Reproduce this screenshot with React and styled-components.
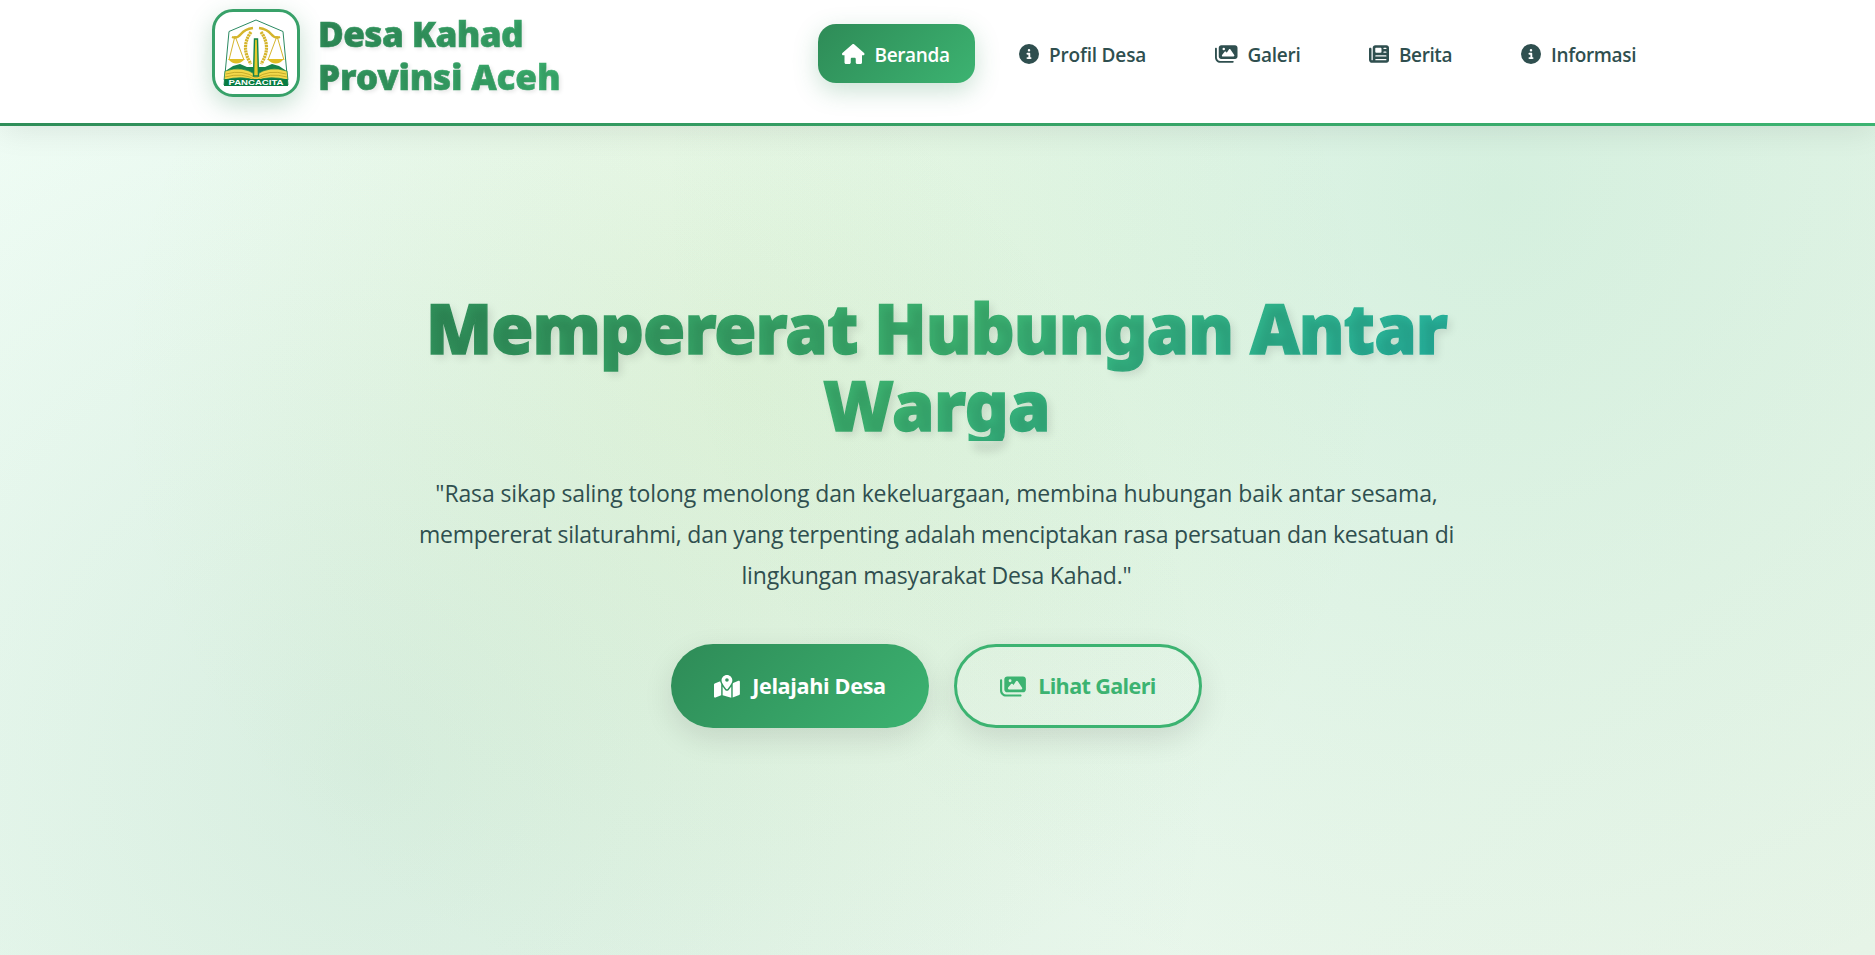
import React from 'react';
import styled, { createGlobalStyle, css } from 'styled-components';
import { FaHouse, FaCircleInfo, FaImages, FaNewspaper, FaMapLocationDot } from 'react-icons/fa6';

const Global = createGlobalStyle`
  *, *::before, *::after { box-sizing: border-box; }
  body {
    margin: 0;
    overflow: hidden;
    color: #2f4f4f;
    font-family: 'Segoe UI', 'Open Sans', 'Noto Sans', sans-serif;
  }
`;

const Page = styled.div`
  display: flex;
  flex-direction: column;
  height: 955px;
  background:
    radial-gradient(circle at 20% 80%, rgba(46, 139, 87, 0.11) 0%, transparent 50%),
    radial-gradient(circle at 80% 20%, rgba(60, 179, 113, 0.12) 0%, transparent 50%),
    radial-gradient(circle at 40% 40%, rgba(154, 205, 50, 0.1) 0%, transparent 50%),
    linear-gradient(135deg, #f2fef7 0%, #ebf9ef 50%, #e6f4e7 100%);
`;

const Header = styled.header`
  flex: none;
  height: 126px;
  background: #fff;
  border-bottom: 3px solid;
  border-image: linear-gradient(135deg, #2e8b57, #3cb371) 1;
  box-shadow: 0 4px 30px rgba(0, 0, 0, 0.09);
`;

const HeaderInner = styled.div`
  display: flex;
  align-items: center;
  justify-content: space-between;
  width: 1451px;
  height: 106px;
  margin: 0 auto;
`;

const Brand = styled.div`
  display: flex;
  align-items: center;
  gap: 18px;
`;

const LogoFrame = styled.div`
  display: flex;
  align-items: center;
  justify-content: center;
  width: 88px;
  height: 88px;
  border: 3px solid #38a169;
  border-radius: 21px;
  background: #fff;
  box-shadow: 0 8px 25px rgba(46, 139, 87, 0.28);
`;

const BrandName = styled.div`
  padding-top: 4px;
  font-family: 'Noto Sans', sans-serif;
  font-weight: 900;
  font-size: 35.2px;
  line-height: 43px;
  background: linear-gradient(135deg, #2e8b57, #3cb371);
  background-clip: text;
  -webkit-text-fill-color: transparent;
  -webkit-text-stroke: 0.6px transparent;
  text-shadow: 2px 2px 4px rgba(0, 0, 0, 0.1);
`;

const TextLine = styled.span`
  display: block;
  white-space: nowrap;
  letter-spacing: ${(p) => p.$spacing || 0}px;
`;

const Nav = styled.nav`
  display: flex;
  gap: 20px;
  margin-right: 2px;
`;

const NavItem = styled.a`
  display: flex;
  align-items: center;
  gap: 10px;
  width: ${(p) => p.$width}px;
  height: 59px;
  padding: 1px 0 0 24px;
  border-radius: 18px;
  font-size: 19px;
  font-weight: 600;
  ${(p) => p.$active && css`
    color: #fff;
    background: linear-gradient(135deg, #2e8b57, #3cb371);
    box-shadow: 0 8px 25px rgba(46, 139, 87, 0.25);
  `}
  svg { flex: none; width: ${(p) => p.$iconWidth}px; height: 20px; }
`;

const NavLabel = styled(TextLine)`
  padding-top: 3px;
`;

const Hero = styled.main`
  display: flex;
  flex-direction: column;
  align-items: center;
  padding: 160px 2px 0 0;
`;

const Title = styled.h1`
  width: 1100px;
  height: 155px;
  margin: 0;
  padding-top: 3px;
  font-family: 'Noto Sans', sans-serif;
  font-weight: 900;
  font-size: 68.4px;
  line-height: 77.4px;
  text-align: center;
  background: linear-gradient(135deg, #2e8b57 0%, #3cb371 50%, #20b2aa 100%);
  background-clip: text;
  -webkit-text-fill-color: transparent;
  -webkit-text-stroke: 1.4px transparent;
  text-shadow: 4px 4px 8px rgba(0, 0, 0, 0.1);
`;

const Lead = styled.p`
  margin: 32px 0 0;
  font-size: 23px;
  line-height: 41px;
  text-align: center;
`;

const Actions = styled.div`
  display: flex;
  gap: 25px;
  margin-top: 48px;
`;

const Button = styled.a`
  display: flex;
  align-items: center;
  justify-content: center;
  gap: 12px;
  width: ${(p) => p.$width}px;
  height: 84px;
  border-radius: 42px;
  font-size: 21.6px;
  font-weight: 700;
  box-shadow: 0 10px 30px rgba(0, 0, 0, 0.11);
  ${(p) => p.$outline ? css`
    color: #3cb371;
    border: 3px solid #3cb371;
    background: rgba(255, 255, 255, 0.05);
  ` : css`
    color: #fff;
    background: linear-gradient(135deg, #2e8b57, #3cb371);
  `}
  svg { flex: none; width: 25.9px; height: 23px; }
`;

const ButtonLabel = styled(TextLine)`
  padding-bottom: 2px;
`;

const Emblem = () => (
  <svg width="66" height="68" viewBox="0 0 66 68">
    <path d="M33 1 L60 12.5 L65 66 H1 L6 12.5 Z" fill="#fff" stroke="#2b8a62" strokeWidth="1" />
    <path d="M4 51 L10 47 L17 45 L24 48 H42 L49 45 L56 47 L62 51 L64 60 H2 Z" fill="#16834b" />
    <g fill="none" stroke="#d5b52c">
      <path d="M30 9 Q22 10 18 15 T9 18 M36 9 Q44 10 48 15 T57 18" strokeWidth="2.4" />
      <path d="M12 17 L6 41 M12 17 L21 41 M54 17 L45 41 M54 17 L61 41" strokeWidth="1" />
      <path d="M28 13 Q17 28 28 45 M38 13 Q49 28 38 45" strokeWidth="3.2" strokeDasharray="2.2 0.6" />
    </g>
    <path d="M5 40 H22 Q13 49 5 40 M44 40 H61 Q53 49 44 40" fill="#e0bd24" />
    <path d="M2 52 Q20 46 33 56 Q46 46 64 52 L65 61 Q46 56 33 62 Q20 56 1 61 Z" fill="#f3d84a" stroke="#15824a" strokeWidth="0.7" />
    <path d="M3 55 Q20 50 33 59 Q46 50 63 55 M2 58 Q20 53 33 61 Q46 53 64 58" fill="none" stroke="#b39a1c" strokeWidth="0.7" />
    <path d="M31.5 20 H34.5 L35.5 57 H30.5 Z" fill="#e6ca2d" stroke="#14834a" strokeWidth="1.4" />
    <path d="M1.5 60 H64.5 L65 67 H1 Z" fill="#087c42" />
    <text x="33" y="66" textAnchor="middle" textLength="55" lengthAdjust="spacingAndGlyphs" fill="#fff" fontFamily="Liberation Sans" fontWeight="700" fontSize="6.8">PANCACITA</text>
  </svg>
);

const navItems = [
  { label: 'Beranda', icon: FaHouse, iconWidth: 22.5, width: 157, spacing: -0.35, active: true },
  { label: 'Profil Desa', icon: FaCircleInfo, iconWidth: 20, width: 176, spacing: -0.18 },
  { label: 'Galeri', icon: FaImages, iconWidth: 22.5, width: 134, spacing: -0.27 },
  { label: 'Berita', icon: FaNewspaper, iconWidth: 20, width: 132, spacing: -0.4 },
  { label: 'Informasi', icon: FaCircleInfo, iconWidth: 20, width: 164, spacing: -0.35 },
];

export default function App() {
  return (
    <Page>
      <Global />
      <Header>
        <HeaderInner>
          <Brand>
            <LogoFrame><Emblem /></LogoFrame>
            <BrandName>
              <TextLine $spacing={-0.6}>Desa Kahad</TextLine>
              <TextLine $spacing={-0.2}>Provinsi Aceh</TextLine>
            </BrandName>
          </Brand>
          <Nav>
            {navItems.map(({ label, icon: Icon, iconWidth, width, active, spacing }) => (
              <NavItem key={label} $width={width} $iconWidth={iconWidth} $active={active}>
                <Icon />
                <NavLabel $spacing={spacing}>{label}</NavLabel>
              </NavItem>
            ))}
          </Nav>
        </HeaderInner>
      </Header>
      <Hero>
        <Title>
          <TextLine $spacing={-0.93}>Mempererat Hubungan Antar</TextLine>
          <TextLine $spacing={-0.7}>Warga</TextLine>
        </Title>
        <Lead>
          <TextLine $spacing={-0.12}>"Rasa sikap saling tolong menolong dan kekeluargaan, membina hubungan baik antar sesama,</TextLine>
          <TextLine $spacing={-0.24}>mempererat silaturahmi, dan yang terpenting adalah menciptakan rasa persatuan dan kesatuan di</TextLine>
          <TextLine $spacing={-0.2}>lingkungan masyarakat Desa Kahad."</TextLine>
        </Lead>
        <Actions>
          <Button $width={258}><FaMapLocationDot /><ButtonLabel $spacing={-0.35}>Jelajahi Desa</ButtonLabel></Button>
          <Button $width={248} $outline><FaImages /><ButtonLabel $spacing={-0.65}>Lihat Galeri</ButtonLabel></Button>
        </Actions>
      </Hero>
    </Page>
  );
}
